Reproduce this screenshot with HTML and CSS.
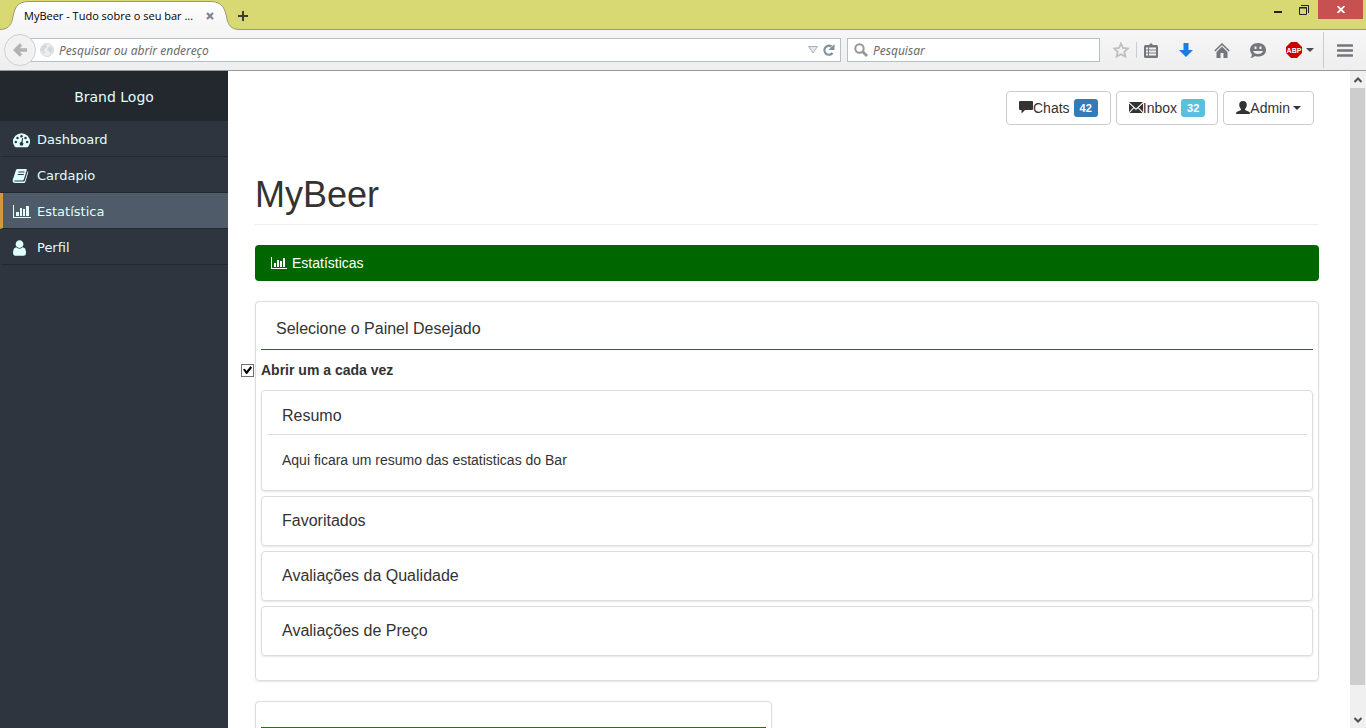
FILE: index.html
```html
<!DOCTYPE html>
<html lang="pt-BR">
<head>
<meta charset="utf-8">
<title>MyBeer - Tudo sobre o seu bar</title>
<link rel="stylesheet" href="styles.css">
</head>
<body>
<header class="browser">
  <div class="tabstrip">
    <div class="tab">
      <svg class="tab-shape" width="240" height="30" viewBox="0 0 240 30" aria-hidden="true"><defs><linearGradient id="tabfill" x1="0" y1="0" x2="0" y2="1"><stop offset="0" stop-color="#fff"/><stop offset="1" stop-color="#f4f4f4"/></linearGradient></defs><path d="M0 30V29.500C7 29.500 11 26 12.500 19C14.500 9 16 1.500 29 1.500H210C223 1.500 225 9 227 19C228.500 26 232 29.500 240 29.500V30Z" fill="url(#tabfill)"/><path d="M0 29.500C7 29.500 11 26 12.500 19C14.500 9 16 1.500 29 1.500H210C223 1.500 225 9 227 19C228.500 26 232 29.500 240 29.500" fill="none" stroke="#9a9b70"/></svg>
      <span class="tab-title">MyBeer - Tudo sobre o seu bar ...</span>
      <button class="plain tab-close" aria-label="Fechar aba"><svg width="8" height="8" viewBox="0 0 8 8"><path d="M1 1L7 7M7 1L1 7" stroke="#7d858e" stroke-width="2.200"/></svg></button>
    </div>
    <button class="plain new-tab" aria-label="Nova aba"><svg width="10" height="10" viewBox="0 0 10 10"><path d="M5 0V10M0 5H10" stroke="#3d3d35" stroke-width="2"/></svg></button>
    <div class="window-controls">
      <button class="plain" aria-label="Minimizar"><svg width="8" height="11" viewBox="0 0 8 11"><path d="M0 8H8" stroke="#222" stroke-width="2"/></svg></button>
      <button class="plain" aria-label="Restaurar"><svg width="10" height="10" viewBox="0 0 10 10" fill="none" stroke="#222"><path d="M2 .5H9.500V8"/><path d="M.5 2.500H7.500V9.500H.5Z"/><path d="M0 3H8"/></svg></button>
      <button class="plain close" aria-label="Fechar"><svg width="8" height="7" viewBox="0 0 8 7"><path d="M.5 0L7.500 7M7.500 0L.5 7" stroke="#fff" stroke-width="1.800"/></svg></button>
    </div>
  </div>
  <div class="toolbar">
    <button class="plain back" aria-label="Voltar"><svg width="15" height="14" viewBox="0 0 15 14"><path d="M8 1.500L2.500 7L8 12.500M3 7H14" fill="none" stroke="#b3b3b3" stroke-width="3.500"/></svg></button>
    <div class="field address">
      <svg width="14" height="14" viewBox="0 0 14 14"><circle cx="7" cy="7" r="6.500" fill="#eceeef" stroke="#d6d8da"/><path d="M2 3L6 1L7 4L4 7L5 10L4 11L1 7ZM9 3L12 4L13 8L10 11L9 8L7 7Z" fill="#d6d8da"/></svg>
      <input type="text" aria-label="Endereço" placeholder="Pesquisar ou abrir endereço">
      <button class="plain" aria-label="Histórico"><svg width="10" height="8" viewBox="0 0 10 8"><path d="M.5 .5H9.500L5 7Z" fill="#dfe5ea" stroke="#a9b4bd"/></svg></button>
      <button class="plain" aria-label="Recarregar"><svg width="12" height="12" viewBox="0 0 12 12"><path d="M9.500 9A4.500 4.500 0 1 1 8.500 2.500" fill="none" stroke="#7d909c" stroke-width="2.200"/><path d="M11.500 0V6H5.500Z" fill="#7d909c"/></svg></button>
    </div>
    <div class="field search">
      <svg width="14" height="14" viewBox="0 0 14 14" fill="none" stroke="#969696"><circle cx="5.500" cy="5.500" r="4.200" stroke-width="2"/><path d="M8.500 8.500L13 13" stroke-width="2.800"/></svg>
      <input type="text" aria-label="Pesquisar" placeholder="Pesquisar">
    </div>
    <nav class="tools" aria-label="Ferramentas">
      <button class="plain star" aria-label="Favoritos"><svg width="16" height="16" viewBox="0 0 16 16"><path d="M8 1.500L10 6L15 6.500L11.300 9.800L12.400 14.700L8 12.200L3.600 14.700L4.700 9.800L1 6.500L6 6Z" fill="none" stroke="#bfbfbf" stroke-width="1.800"/></svg></button>
      <button class="plain list" aria-label="Lista"><svg width="14" height="15" viewBox="0 0 14 15"><path d="M5 2L7 0L9 2H12.500Q14 2 14 3.500V13.500Q14 15 12.500 15H1.500Q0 15 0 13.500V3.500Q0 2 1.500 2Z" fill="#73777d"/><path d="M2 5.500H4M5 5.500H12M2 8.500H4M5 8.500H12M2 11.500H4M5 11.500H12" stroke="#f1f1f1" stroke-width="1.800"/></svg></button>
      <button class="plain" aria-label="Downloads"><svg width="14" height="14" viewBox="0 0 14 14"><path d="M4.500 0H9.500V7H14L7 14L0 7H4.500Z" fill="#177ee6"/></svg></button>
      <button class="plain" aria-label="Início"><svg width="16" height="15" viewBox="0 0 16 15"><path d="M.8 8L8 1L15.200 8" fill="none" stroke="#73777d" stroke-width="1.600"/><path d="M2.500 9L8 3.500L13.500 9V15H9.500V10H6.500V15H2.500Z" fill="#73777d"/></svg></button>
      <button class="plain" aria-label="Conversa"><svg width="16" height="15" viewBox="0 0 16 15"><path d="M8 0C13 0 16 3 16 7S13 13.500 8 13.500Q6 13.500 5 13Q3 15 .5 15Q2 13 2 11.500Q0 9.500 0 7C0 3 3 0 8 0Z" fill="#73777d"/><path d="M4.500 3.500H6.500V6H4.500ZM9.500 3.500H11.500V6H9.500ZM3 8H13Q12 11 8 11T3 8Z" fill="#f1f1f1"/></svg></button>
      <button class="plain adblock" aria-label="Adblock Plus"><svg width="28" height="16" viewBox="0 0 28 16"><path d="M5 0H11L16 5V11L11 16H5L0 11V5Z" fill="#c70000"/><text x="8" y="11" text-anchor="middle" class="abp">ABP</text><path d="M20 6H28L24 10Z" fill="#4a4a4a"/></svg></button>
      <button class="plain menu" aria-label="Menu"><svg width="16" height="13" viewBox="0 0 16 13"><path d="M1 1.500H15M1 6.500H15M1 11.500H15" stroke="#73777d" stroke-width="2.600" stroke-linecap="round"/></svg></button>
    </nav>
  </div>
</header>

<div class="page">
  <aside class="sidebar">
    <div class="brand">Brand Logo</div>
    <nav aria-label="Principal">
      <a class="item" href="#"><svg width="19" height="16" viewBox="-1 0 20 16"><path d="M2 15Q0 12.500 0 10A9 9 0 0 1 18 10Q18 12.500 16 15Q15.500 15.500 15 15.500H3Q2.400 15.500 2 15Z" fill="#e0ffff"/><g fill="#2f353e"><circle cx="3" cy="10" r="1.300"/><circle cx="4.800" cy="5.800" r="1.300"/><circle cx="9" cy="4" r="1.300"/><circle cx="13.200" cy="5.800" r="1.300"/><circle cx="15" cy="10" r="1.300"/><circle cx="9" cy="12" r="2"/><path d="M9.800 6L10.800 6.200L9.800 12L8.400 11.600Z"/></g></svg>Dashboard</a>
      <a class="item" href="#"><svg width="19" height="16" viewBox="0 0 18 16"><path d="M5.200 1H13.500Q14.600 1 14.200 2.200L11.300 11.500Q11 12.500 10 12.500H2.300Q1.300 12.800 1.800 13.500H11Q12 13.500 12.300 12.500L15.200 3.200Q16 3.700 15.700 4.600L12.900 13.800Q12.500 15 11.300 15H2.200Q-.2 14.500.2 12L3.400 2.300Q3.900 1 5.200 1Z" fill="#e0ffff"/><path d="M6 4H12M5.300 6.500H11.300" stroke="#2f353e" stroke-width="1"/></svg>Cardapio</a>
      <a class="item active" href="#"><svg width="19" height="16" viewBox="0 0 19 16" fill="#e0ffff"><path d="M1 1H2V13H19V14H1ZM4 8H7V12H4ZM8 4H10V12H8ZM11 5H13V12H11ZM14 2H17V12H14Z"/></svg>Estatística</a>
      <a class="item" href="#"><svg width="19" height="16" viewBox="150 120 1880 1550" fill="#e0ffff"><path d="M1536 1399q0 109-62.500 187t-150.500 78h-854q-88 0-150.500-78t-62.500-187q0-85 8.500-160.500t31.500-152 58.500-131 94-89 134.500-34.500q131 128 313 128t313-128q76 0 134.500 34.500t94 89 58.500 131 31.500 152 8.500 160.500zm-256-887q0 159-112.500 271.500t-271.500 112.500-271.500-112.500-112.500-271.500 112.500-271.500 271.500-112.500 271.500 112.500 112.500 271.500z"/></svg>Perfil</a>
    </nav>
  </aside>

  <main class="content">
    <div class="actions">
      <button class="btn"><svg width="14" height="14" viewBox="0 0 14 14"><path d="M1 0H13Q14 0 14 1V8Q14 9 13 9H6L2.500 12.500V9H1Q0 9 0 8V1Q0 0 1 0Z" fill="#333"/></svg>Chats <span class="badge blue">42</span></button>
      <button class="btn"><svg width="14" height="14" viewBox="0 0 14 14"><path d="M0 1H14L7 7.500ZM0 2.500L4.300 6.500L0 11ZM14 2.500L9.700 6.500L14 11ZM5 7.200L7 9L9 7.200L13.500 12H.5Z" fill="#333"/></svg>Inbox <span class="badge cyan">32</span></button>
      <button class="btn"><svg width="14" height="14" viewBox="0 0 14 14"><path d="M7 0Q10.800 0 10.800 4Q10.800 6.500 9 8.200V9L13 10.700Q14 11.300 14 13H0Q0 11.300 1 10.700L5 9V8.200Q3.200 6.500 3.200 4Q3.200 0 7 0Z" fill="#333"/></svg>Admin <span class="caret"></span></button>
    </div>

    <h1 class="page-title">MyBeer</h1>
    <div class="banner"><svg width="17" height="14" viewBox="0 0 17 14" fill="#fff"><path d="M1 1H2V12H17V13H1ZM4 7H6V11H4ZM7 4H9V11H7ZM10 5H12V11H10ZM13 2H15V11H13Z"/></svg>Estatísticas</div>

    <section class="panel">
      <h2 class="panel-title">Selecione o Painel Desejado</h2>
      <label class="check"><input type="checkbox" checked>Abrir um a cada vez</label>
      <div class="accordion">
        <section class="card">
          <h3 class="card-title open">Resumo</h3>
          <p class="card-text">Aqui ficara um resumo das estatisticas do Bar</p>
        </section>
        <section class="card"><h3 class="card-title">Favoritados</h3></section>
        <section class="card"><h3 class="card-title">Avaliações da Qualidade</h3></section>
        <section class="card"><h3 class="card-title">Avaliações de Preço</h3></section>
      </div>
    </section>
    <section class="panel half"><div class="panel-rule"></div></section>
  </main>

  <div class="scrollbar" aria-hidden="true">
    <svg width="8" height="17" viewBox="0 0 8 17"><path d="M.5 11L4 7.500L7.500 11" fill="none" stroke="#505050" stroke-width="2"/></svg>
    <div class="thumb"></div>
    <svg width="8" height="17" viewBox="0 0 8 17"><path d="M.5 7L4 10.500L7.500 7" fill="none" stroke="#505050" stroke-width="2"/></svg>
  </div>
</div>
</body>
</html>
```

FILE: styles.css
```css
* { box-sizing: border-box; }

body {
  margin: 0;
  height: 100vh;
  display: flex;
  flex-direction: column;
  overflow: hidden;
  background: #fff;
  color: #333;
  font: 14px/20px "Liberation Sans", Arial, sans-serif;
}

svg { display: block; flex: none; }

.plain {
  display: flex;
  align-items: center;
  justify-content: center;
  padding: 0;
  border: 0;
  background: none;
}

/* Browser chrome */
.browser { flex: none; font: 12px/16px "Open Sans", sans-serif; }

.tabstrip {
  display: flex;
  align-items: flex-start;
  height: 30px;
  background: #d9d973;
  border-bottom: 1px solid #9a9b70;
}

.tab {
  position: relative;
  display: flex;
  align-items: center;
  width: 236px;
  height: 30px;
  padding: 2px 22px 0 24px;
  color: #000;
  font-size: 11px;
}

.tab-shape { position: absolute; top: 0; left: 0; }
.tab-title { position: relative; flex: 1; white-space: nowrap; }
.tab-close { position: relative; }
.new-tab { width: 14px; height: 31px; }

.window-controls { display: flex; margin-left: auto; padding-right: 3px; }
.window-controls .plain { width: 26px; height: 19px; }
.window-controls .close { width: 45px; margin-left: 1px; background: #c75050; }

.toolbar {
  display: flex;
  align-items: center;
  height: 41px;
  padding: 0 1px 0 4px;
  background: linear-gradient(#f6f6f6, #eee);
  border-bottom: 1px solid #999;
}

.back {
  z-index: 1;
  width: 32px;
  height: 32px;
  border: 1px solid #cfcfcf;
  border-radius: 50%;
  background: #f2f2f2;
}

.field {
  display: flex;
  align-items: center;
  height: 24px;
  border: 1px solid #b3bfc9;
  background: #fff;
}

.address { flex: 1; gap: 5px; margin-left: -6px; padding: 0 5px 0 9px; }
.search { width: 253px; gap: 5px; margin-left: 6px; padding-left: 6px; }

.field input {
  flex: 1;
  min-width: 0;
  height: 20px;
  padding: 0;
  border: 0;
  outline: 0;
  background: none;
  font: italic 12px/16px "Noto Sans", "Open Sans", sans-serif;
}

.field input::placeholder { color: #6b6b6b; opacity: 1; }

.tools { display: flex; align-items: center; margin-left: 6px; }
.tools .plain { width: 36px; height: 24px; }
.tools .star { width: 31px; height: 16px; border-right: 1px solid #c3cdd6; }
.tools .list { width: 27px; margin-right: 4px; }
.tools .adblock { width: 47px; }
.tools .menu { width: 42px; height: 36px; border-left: 1px solid #c3cdd6; }
.abp { fill: #fff; font: bold 7px "Liberation Sans", sans-serif; }

/* Page */
.page {
  flex: 1;
  min-height: 0;
  display: grid;
  grid-template-columns: 228px 1fr 16px;
}

.sidebar {
  background: #2f353e;
  color: #e0ffff;
  font: 13px/20px "DejaVu Sans", Verdana, sans-serif;
}

.brand {
  padding: 16px 0 14px;
  background: #23282e;
  font-size: 14px;
  text-align: center;
}

.item {
  display: flex;
  align-items: center;
  gap: 6px;
  height: 36px;
  padding: 2px 0 0 9px;
  border-left: 3px solid transparent;
  border-bottom: 1px solid #23282e;
  color: inherit;
  text-decoration: none;
}

.item.active { background: #4f5b69; border-left-color: #d19b3d; }

.content { min-width: 0; overflow: hidden; padding: 20px 31px 0 27px; }

.actions { display: flex; justify-content: flex-end; gap: 5px; padding-right: 5px; }

.btn {
  display: flex;
  align-items: center;
  height: 34px;
  padding: 0 12px;
  border: 1px solid #ccc;
  border-radius: 4px;
  background: #fff;
  color: #333;
  font: inherit;
}

.badge {
  margin-left: 4px;
  padding: 0 6px;
  border-radius: 3px;
  color: #fff;
  font-size: 11px;
  font-weight: bold;
  line-height: 18px;
}

.blue { background: #337ab7; }
.cyan { background: #5bc0de; }

.caret {
  margin-left: 3px;
  border: 4px solid transparent;
  border-top-color: #333;
  border-bottom: 0;
}

.page-title {
  margin: 50px 0 20px;
  padding-bottom: 9px;
  border-bottom: 1px solid #eee;
  font-size: 36px;
  font-weight: normal;
  line-height: 40px;
}

.banner {
  display: flex;
  align-items: center;
  gap: 5px;
  height: 36px;
  padding: 0 15px;
  border-radius: 4px;
  background: #060;
  color: #fff;
}

.panel {
  margin-top: 20px;
  padding: 5px 5px 24px;
  border: 1px solid #ddd;
  border-radius: 4px;
  box-shadow: 0 1px 2px rgba(0, 0, 0, .1);
}

.panel-title {
  margin: 0;
  padding: 12px 15px 10px;
  border-bottom: 1px solid #1a741a;
  font-size: 16px;
  font-weight: normal;
}

.check {
  display: flex;
  align-items: center;
  width: max-content;
  margin: 10px 0 10px -20px;
  font-weight: bold;
}

.check input {
  appearance: none;
  display: grid;
  place-items: center;
  width: 13px;
  height: 13px;
  margin: 0 7px 0 0;
  border: 1px solid #707070;
  background: #fff;
}

.check input:checked::before {
  content: "";
  width: 9px;
  height: 9px;
  background: #000;
  clip-path: polygon(0 45%, 20% 35%, 40% 60%, 85% 5%, 100% 25%, 45% 95%, 35% 95%);
}

.accordion { display: grid; gap: 5px; }

.card {
  padding: 5px;
  border: 1px solid #ddd;
  border-radius: 4px;
  box-shadow: 0 1px 2px rgba(0, 0, 0, .1);
}

.card-title {
  margin: 0;
  padding: 9px 15px;
  font-size: 16px;
  font-weight: normal;
}

.card-title.open { padding: 10px 15px 8px; border-bottom: 1px solid #ddd; }
.card-text { margin: 0; padding: 15px; }

.half { width: 517px; }
.panel-rule { margin-top: 20px; border-top: 1px solid #1a741a; }

.scrollbar {
  display: flex;
  flex-direction: column;
  align-items: center;
  padding-right: 1px;
  background: #f0f0f0;
}

.thumb { flex: 0 1 597px; width: 15px; margin-bottom: auto; background: #cdcdcd; }
```
